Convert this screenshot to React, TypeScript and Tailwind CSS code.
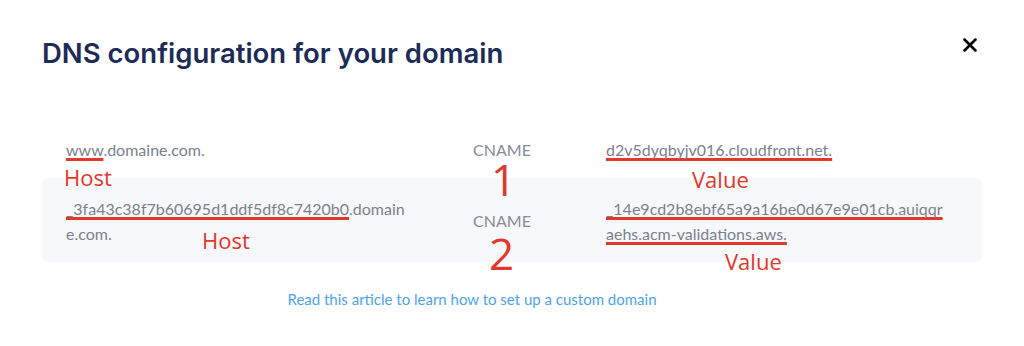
import { X } from "lucide-react";

const mark = "underline decoration-[#e2372c] decoration-[3px] underline-offset-[2px] [text-decoration-skip-ink:none]";

const rows = [
  {
    host: (
      <>
        <span className={mark}>www</span>.domaine.com.
      </>
    ),
    value: <span className={mark}>d2v5dyqbyjv016.cloudfront.net.</span>,
  },
  {
    host: (
      <>
        <span className={mark}>_3fa43c38f7b60695d1ddf5df8c7420b0</span>.domaine.com.
      </>
    ),
    value: <span className={mark}>_14e9cd2b8ebf65a9a16be0d67e9e01cb.auiqqraehs.acm-validations.aws.</span>,
  },
];

// red hand-written labels sitting over the screenshot
function Note({ x, y, text, big }: { x: number; y: number; text: string; big?: boolean }) {
  return (
    <div
      className={`absolute leading-none text-[#e2372c] ${big ? "text-[44px]" : "text-[22px]"}`}
      style={{ left: x, top: y, fontFamily: '"Open Sans", sans-serif' }}
    >
      {text}
    </div>
  );
}

export default function App() {
  return (
    <div className="relative h-[346px] w-[1024px] overflow-hidden bg-white px-[42px] pt-[37px]" style={{ fontFamily: "Lato, sans-serif" }}>
      <div className="flex h-8 items-start justify-between">
        <h1 className="text-[27.5px] leading-8 font-semibold text-[#1d2b57]" style={{ fontFamily: "Inter, sans-serif" }}>
          DNS configuration for your domain
        </h1>
        <X className="-mt-[3px] mr-[1px] h-[22px] w-[22px] text-black" strokeWidth={2.8} />
      </div>

      <div className="mt-[50px]">
        {rows.map((r, i) => (
          <div key={i} className={`flex items-center rounded-md px-6 pt-[18px] pb-4 ${i === 1 ? "bg-[#f7f8fa]" : ""}`}>
            <div className="w-[344px] break-all text-[16px] leading-[25px] text-[#7c818e]">{r.host}</div>
            <div className="ml-[14px] w-[156px] text-center text-[16px] text-[#878c99]">CNAME</div>
            <div className="ml-[26px] w-[341px] break-all text-[16px] leading-[25px] text-[#7c818e]">{r.value}</div>
          </div>
        ))}
      </div>

      <div className="mt-[27px] flex justify-center pr-[80px] text-[15px] leading-5 text-[#4ea3ef]">
        Read this article to learn how to set up a custom domain
      </div>

      <Note x={64} y={166} text="Host" />
      <Note x={491} y={157} text="1" big />
      <Note x={692} y={168} text="Value" />
      <Note x={202} y={229} text="Host" />
      <Note x={489} y={231} text="2" big />
      <Note x={725} y={250} text="Value" />
    </div>
  );
}
